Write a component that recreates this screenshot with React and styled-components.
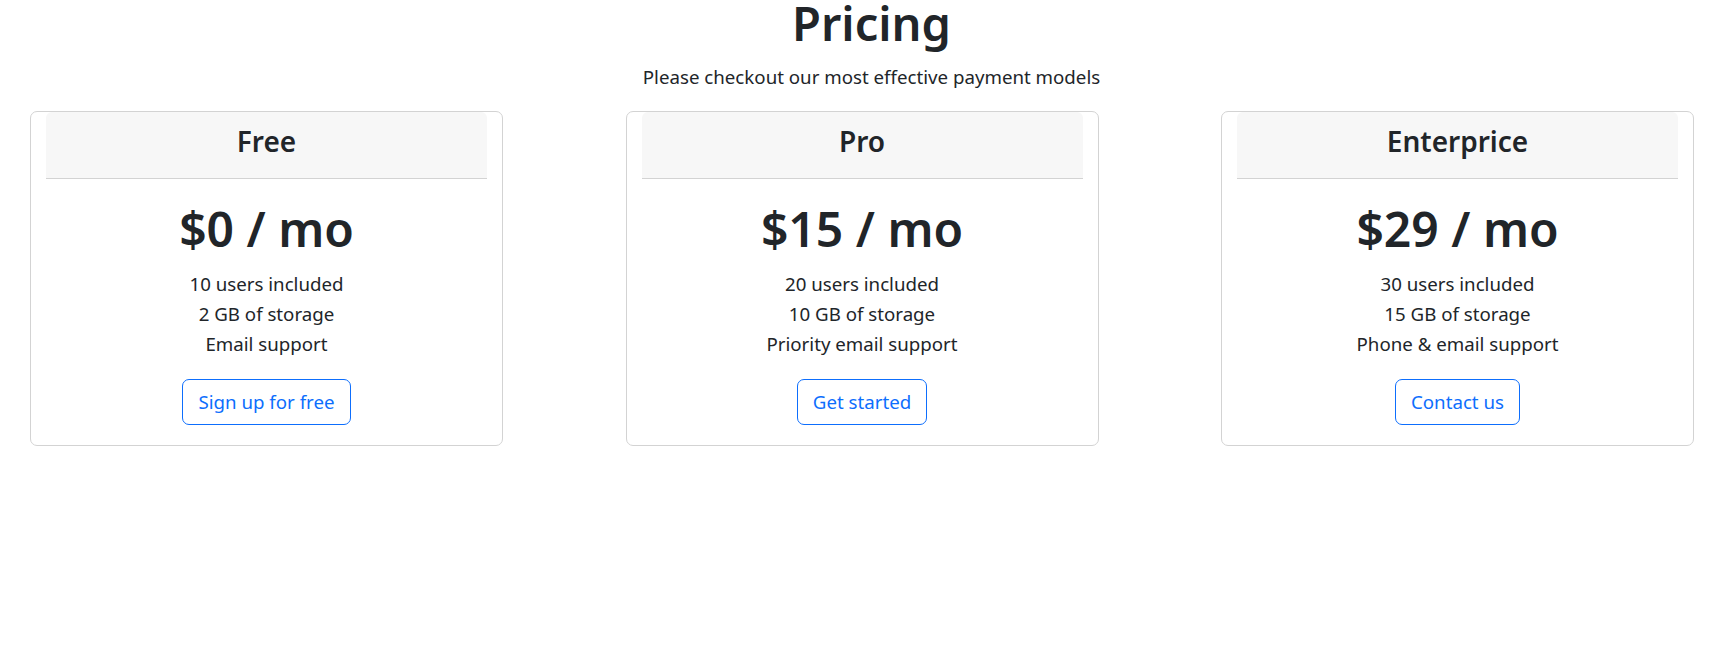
import styled, { createGlobalStyle } from "styled-components";

const GlobalStyle = createGlobalStyle`
  * {
    box-sizing: border-box;
  }
  body {
    margin: 0;
    background: #ffffff;
    color: #212529;
    font-family: "Noto Sans", "Open Sans", sans-serif;
  }
`;

const PricingWrapper = styled.div`
  display: flex;
  flex-direction: column;
  width: 100%;
`;
const TitleContainer = styled.header`
  display: flex;
  flex-direction: column;
  align-items: center;
  padding-left: 13px;
  margin-bottom: 19px;
`;
const Title = styled.h1`
  margin: 0;
  font-size: 47px;
  font-weight: 600;
  line-height: 46px;
`;
const Subtitle = styled.p`
  margin: 16px 0 0;
  font-size: 18.7px;
  line-height: 30px;
`;
const Cards = styled.section`
  display: flex;
  justify-content: space-between;
  padding: 0 36px 0 30px;
`;
const Card = styled.article`
  display: flex;
  flex-direction: column;
  width: 473px;
  padding: 0 15px;
  border: 1px solid #d3d3d3;
  border-radius: 7px;
`;
const CardHeader = styled.div`
  padding: 11px 15px 19px;
  background: #f7f7f7;
  border-bottom: 1px solid #d3d3d3;
  border-radius: 6px 6px 0 0;
  text-align: center;
`;
const PlanName = styled.h4`
  margin: 0;
  font-size: 28px;
  font-weight: 600;
  line-height: 36px;
`;
const CardBody = styled.div`
  display: flex;
  flex-direction: column;
  align-items: center;
  padding: 20px 0;
`;
const Price = styled.h1`
  margin: 0 0 10px;
  font-size: 48px;
  font-weight: 600;
  line-height: 60px;
`;
const Features = styled.ul`
  list-style: none;
  margin: 0 0 20px;
  padding: 0;
  text-align: center;
`;
const Feature = styled.li`
  font-size: 18.7px;
  line-height: 30px;
`;
const OutlineButton = styled.button`
  padding: 7px 15px;
  font-family: inherit;
  font-size: 18.7px;
  line-height: 30px;
  color: #0d6efd;
  background: transparent;
  border: 1px solid #0d6efd;
  border-radius: 7px;
  cursor: pointer;
`;

const plans = [
  {
    name: "Free",
    price: "$0 / mo",
    features: ["10 users included", "2 GB of storage", "Email support"],
    action: "Sign up for free",
  },
  {
    name: "Pro",
    price: "$15 / mo",
    features: ["20 users included", "10 GB of storage", "Priority email support"],
    action: "Get started",
  },
  {
    name: "Enterprice",
    price: "$29 / mo",
    features: ["30 users included", "15 GB of storage", "Phone & email support"],
    action: "Contact us",
  },
];

function App() {
  return (
    <PricingWrapper>
      <GlobalStyle />
      <TitleContainer>
        <Title>Pricing</Title>
        <Subtitle>Please checkout our most effective payment models</Subtitle>
      </TitleContainer>
      <Cards>
        {plans.map((plan) => (
          <Card key={plan.name}>
            <CardHeader>
              <PlanName>{plan.name}</PlanName>
            </CardHeader>
            <CardBody>
              <Price>{plan.price}</Price>
              <Features>
                {plan.features.map((f) => (
                  <Feature key={f}>{f}</Feature>
                ))}
              </Features>
              <OutlineButton>{plan.action}</OutlineButton>
            </CardBody>
          </Card>
        ))}
      </Cards>
    </PricingWrapper>
  );
}

export default App;
